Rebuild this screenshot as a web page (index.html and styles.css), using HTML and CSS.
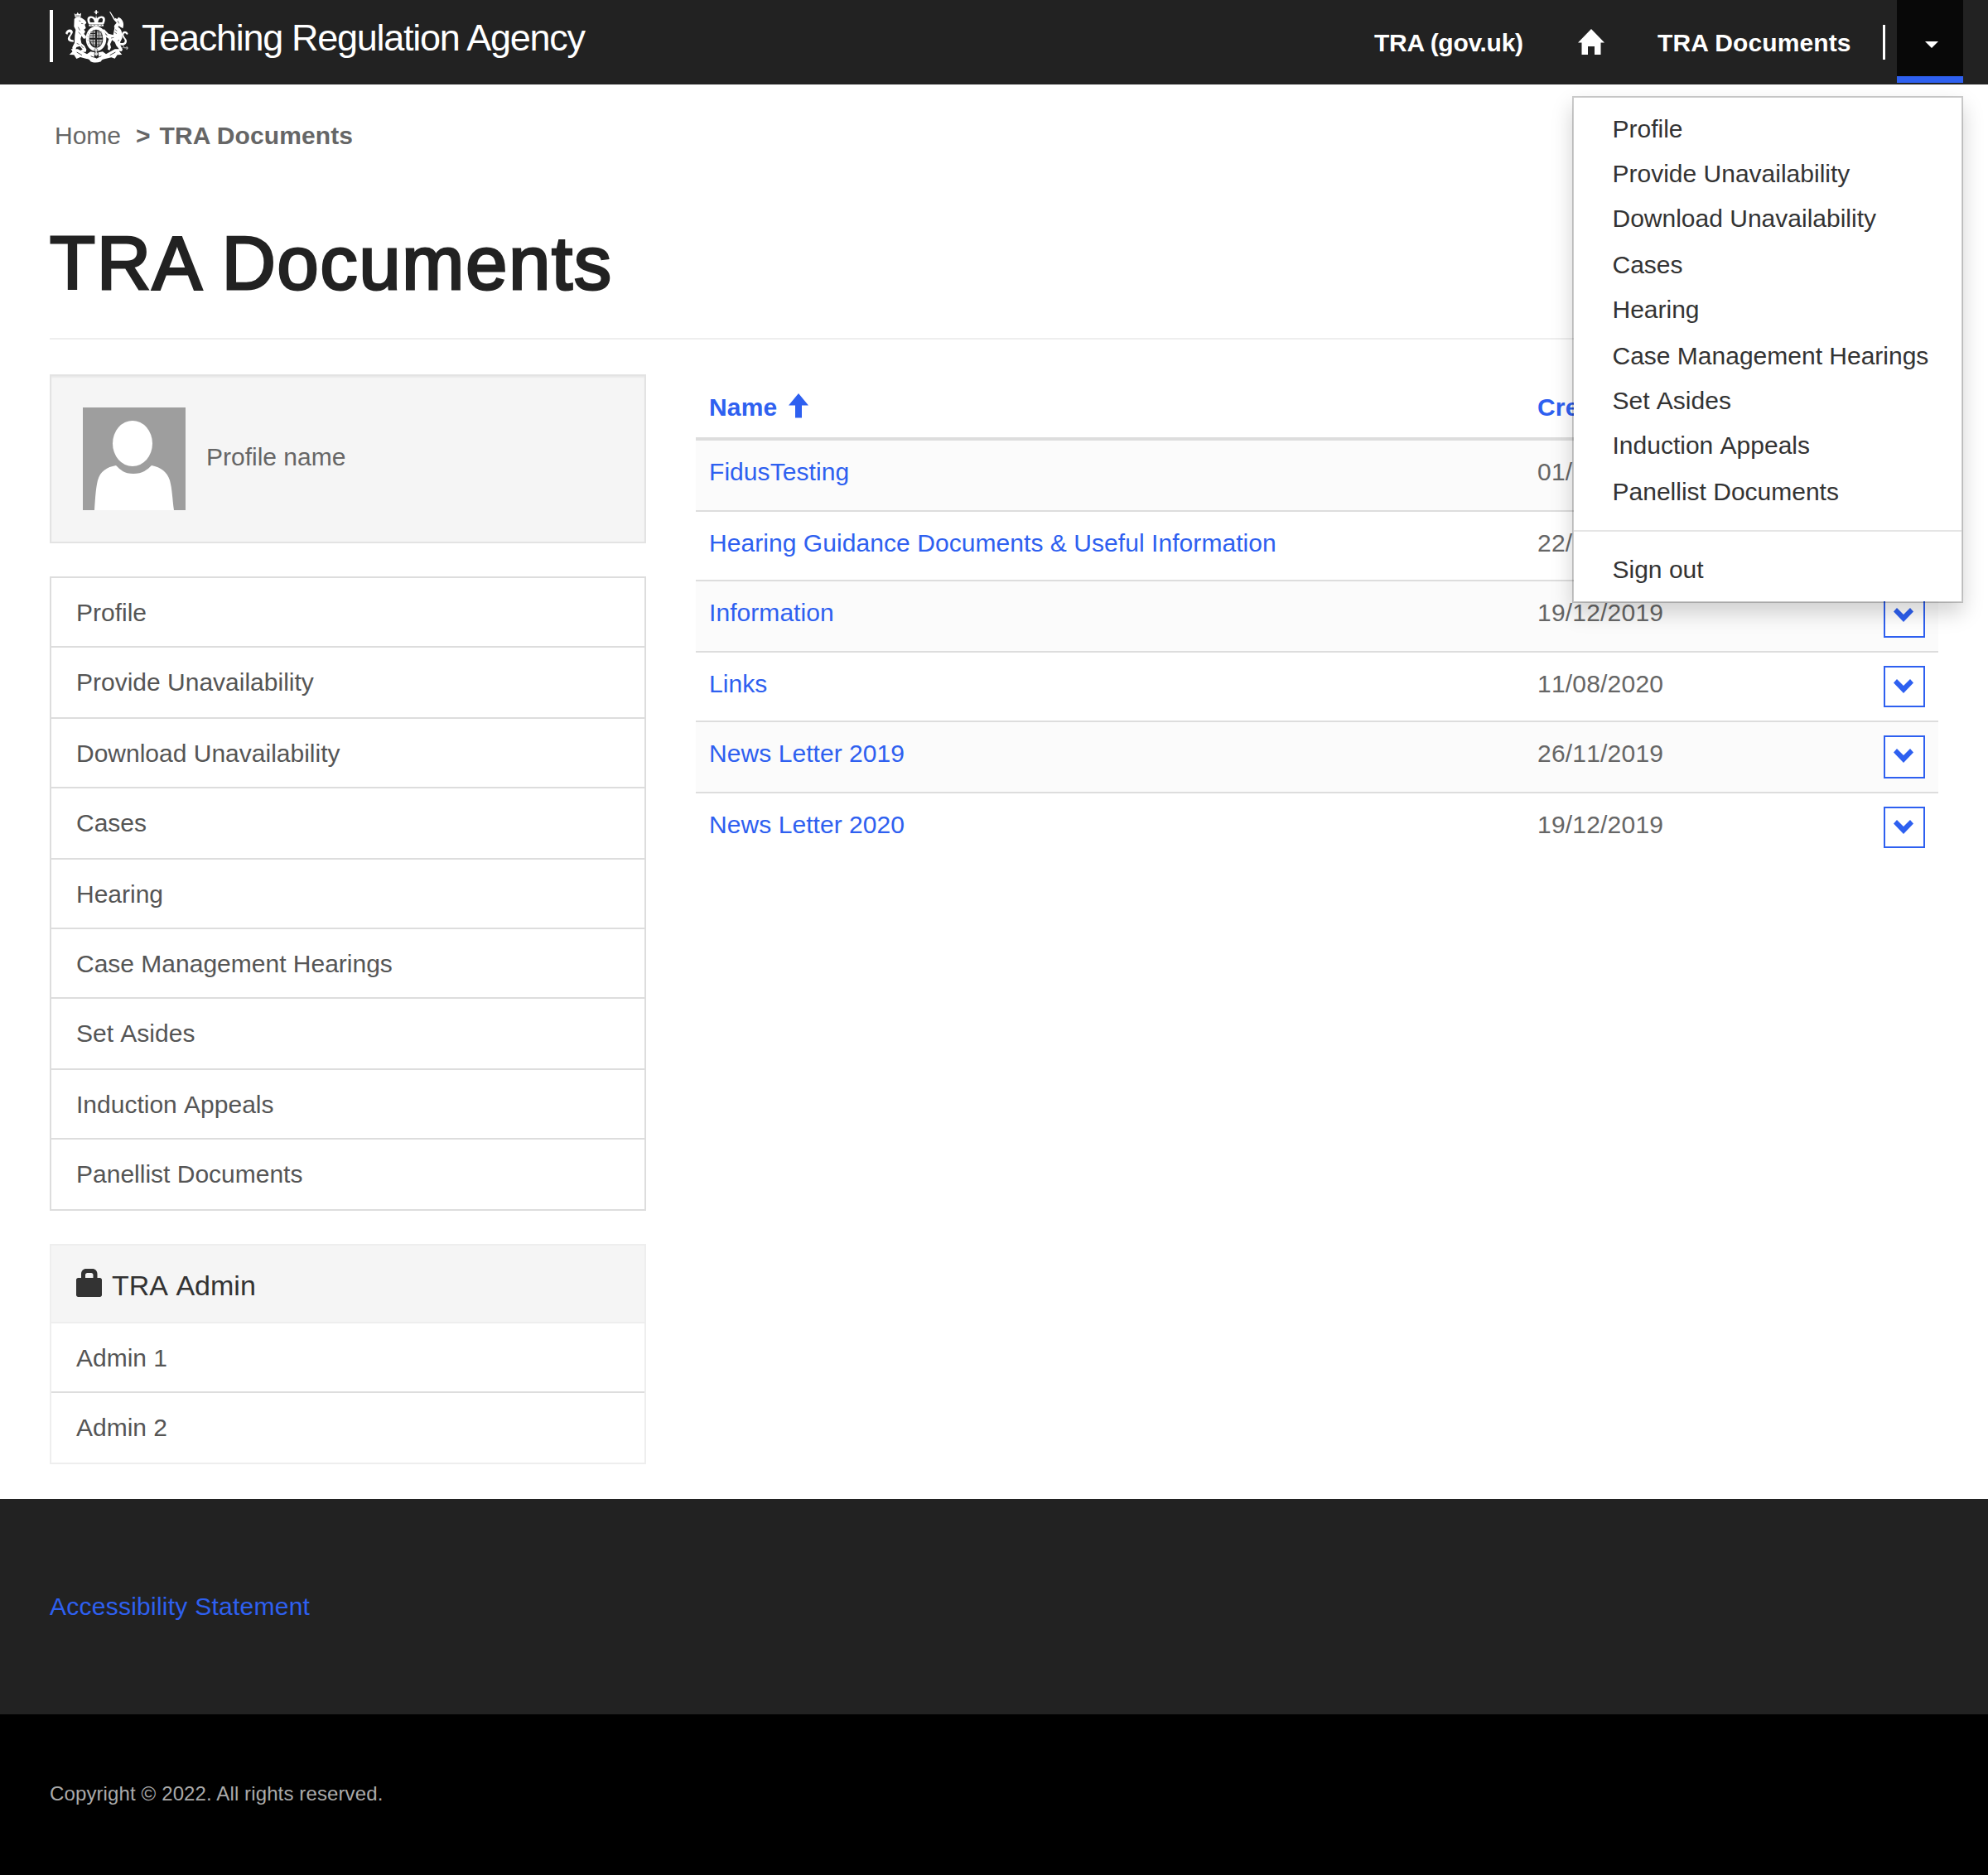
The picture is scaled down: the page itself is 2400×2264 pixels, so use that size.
FILE: index.html
```html
<!DOCTYPE html>
<html lang="en">
<head>
<meta charset="utf-8">
<title>TRA Documents</title>
<link rel="stylesheet" href="styles.css">
</head>
<body>
<header class="topbar">
  <a class="brand">
    <span class="brand-bar"></span>
    <svg class="crest" viewBox="0 0 300 225" fill="#fff" stroke="none">
      <!-- crown -->
      <path d="M136 22h5v5h5v4h-5v6h-5v-6h-5v-4h5z"/>
      <path d="M111 72c-7-14-6-27 5-28 8-1 15 2 20 8l2-13 3 13c5-6 12-9 20-8 11 1 12 14 5 28z"/>
      <path d="M117 66c-4-9-3-15 3-16 7 0 11 7 12 16zM160 66c4-9 3-15-3-16-7 0-11 7-12 16z" fill="#222"/>
      <path d="M112 73h53v7h-53z"/>
      <path d="M118 76h4m8 0h4m9 0h4m8 0h4" stroke="#222" stroke-width="2"/>
      <!-- garter and shield -->
      <path fill-rule="evenodd" d="M138 80c21 0 37 19 37 45s-16 45-37 45-37-19-37-45 16-45 37-45zm0 12c-14 0-25 13-25 33s11 33 25 33 25-13 25-33-11-33-25-33z"/>
      <path d="M116 108h19v14h-21zM141 97h12l7 25h-19zM114 128h21v24l-10-3zM141 128h20l-6 20-14 7zM121 96h14v9h-17z" opacity=".68"/>
      <path d="M118 101h40M115 114h46M115 136h46M121 147h34M127 94v60M148 94v60" stroke="#222" stroke-width="2"/>
      <path d="M107 105l5 4m-6 8h6m-6 14h6m-3 14 6-3m46-37-5 4m6 8h-6m6 14h-6m3 14-6-3" stroke="#999" stroke-width="2"/>
      <!-- lion -->
      <path d="M62 47l-3-14 7 5 5-9 5 8 8-5-2 15z"/>
      <path d="M64 42h15" stroke="#222" stroke-width="2"/>
      <path d="M59 54c4-7 17-9 27-4 8 4 16 10 17 18l-6 6 4 13-7 5 5 8-5 8 8 8-1 8-8 1-8-10-3 11 3 16 11 9 7 13-2 9H83l-1-6 7-3-10-12-12 4-4 10 3 11-3 6H48l-1-5 6-4-1-18 8-16 1-26 3-21-6-12z"/>
      <path d="M76 60l6 2m2 8 7 1M73 83l6 12m-5 6 8 9m-14 32 9 4M84 150l8 9" stroke="#222" stroke-width="2" fill="none"/>
      <path d="M57 137c-20 0-26-10-18-21 5-7 9-11 4-14-5-2-9 5-9 9l-7-5c3-12 15-18 23-12 8 7 1 15-4 22-5 8 0 14 10 14z"/>
      <!-- unicorn -->
      <path d="M186 27l4 1 17 27-4 3zM203 57l5-7 6 4 5-7c12 4 20 17 18 32l-2 9-8-5-7-2-8 6-9-3 2-8 7-8z"/>
      <path d="M206 79c12 3 23 9 25 23l2 20-8 16 2 13 7 13-3 7-7-1-5-10-8-10-5-12-10-8-7 15 3 12-5 10-7-3 1-10-3-9 6-19-9-7-9 4-5-5 6-9 13 5-12-13-8 1-2-7 9-4 16 16 17 5z"/>
      <path d="M216 60l5 10m-1 8 6 8m-19 6 7 5m-9 5 8 5m-21 16 10-2m14 13 6-5m-18-66 7 3" stroke="#222" stroke-width="2" fill="none"/>
      <path d="M225 140c11 4 20-2 16-11-4-8-13-14-9-24 4-9 18-10 22 3l-5 3c-3-7-10-7-11-1-1 8 10 14 11 23 1 14-14 20-24 13z"/>
      <path d="M226 147c13-2 16 8 7 12m6-1 13 1m-4-6 5 6-5 6" stroke="#fff" stroke-width="2.500" fill="none"/>
      <!-- ribbon -->
      <path d="M47 163h25l33 18 13-9 15 3-2 17 9 5 8-5-2-17 16-3 12 9 32-18h24l-8 8 10 12-17 1-9 13-13-4-22 5c-8 1-14 4-15 10-13 5-28 5-38 0-2-6-7-10-15-10l-22-6-14 6-9-14-17-1 12-11z"/>
      <path d="M68 174l19 11M208 174l-20 11M119 188c10 6 27 6 38 0" stroke="#222" stroke-width="2.500" fill="none"/>
      <path d="M131 164l6-5 7 5-3 9 6 8-8 8-8-8 5-7z" fill="#ddd" stroke="#222" stroke-width="1.500"/>
    </svg>
    <span class="brand-name">Teaching Regulation Agency</span>
  </a>
  <nav class="topnav">
    <a class="nav-gov">TRA (gov.uk)</a>
    <svg class="nav-home" viewBox="0 0 32 31" fill="#fff"><path d="M16 0l16 16.500h-4.500V31H20V21h-8v10H4.500V16.500H0z"/></svg>
    <a class="nav-docs">TRA Documents</a>
    <span class="nav-divider"></span>
    <div class="user-menu">
      <span class="caret"></span>
      <ul class="dropdown">
        <li>Profile</li>
        <li>Provide Unavailability</li>
        <li>Download Unavailability</li>
        <li>Cases</li>
        <li>Hearing</li>
        <li>Case Management Hearings</li>
        <li>Set Asides</li>
        <li>Induction Appeals</li>
        <li>Panellist Documents</li>
        <li class="sign-out">Sign out</li>
      </ul>
    </div>
  </nav>
</header>

<main class="page">
  <div class="breadcrumb"><a>Home</a><b class="crumb-sep">&gt;</b><b>TRA Documents</b></div>
  <h1>TRA Documents</h1>
  <div class="columns">
    <aside class="sidebar">
      <div class="profile">
        <svg class="avatar" viewBox="0 0 124 124">
          <path fill="#9e9e9e" d="M0 0h124v124H0z"/>
          <ellipse cx="60" cy="43.500" rx="24" ry="27.500" fill="#fff"/>
          <path fill="#fff" d="M14 124c1-14 1.500-26 4-36 3-11 11-16 22-18 5 5 10 10 21 10s17-5 22-10c11 2 19 8 22 18 3 11 3 22 5 36z"/>
        </svg>
        <span>Profile name</span>
      </div>
      <ul class="side-list">
        <li>Profile</li>
        <li>Provide Unavailability</li>
        <li>Download Unavailability</li>
        <li>Cases</li>
        <li>Hearing</li>
        <li>Case Management Hearings</li>
        <li>Set Asides</li>
        <li>Induction Appeals</li>
        <li>Panellist Documents</li>
      </ul>
      <section class="admin">
        <h2>
          <svg class="lock" viewBox="0 0 31 34" fill="#333"><path fill-rule="evenodd" d="M6 11V6.500C6 2.500 8.500 0 12 0h7.500c3.500 0 6 2.500 6 6.500V11H28.500c1.500 0 2.500 1 2.500 2.500v18c0 1.500-1 2.500-2.500 2.500h-26C1 34 0 33 0 31.500v-18C0 12 1 11 2.500 11zM11 11h9.500V7.500c0-1.500-1-2.500-2.500-2.500h-4.500C12 5 11 6 11 7.500z"/></svg>
          <span>TRA Admin</span>
        </h2>
        <ul>
          <li>Admin 1</li>
          <li>Admin 2</li>
        </ul>
      </section>
    </aside>

    <section class="documents">
      <div class="row head">
        <span>Name <svg class="sort" viewBox="0 0 24 30" fill="#2e60f0"><path d="M12 0l12 14.500h-8V29.500H8V14.500H0z"/></svg></span>
        <span>Cre</span>
      </div>
      <div class="row"><a>FidusTesting</a><span>01/</span></div>
      <div class="row"><a>Hearing Guidance Documents &amp; Useful Information</a><span>22/</span></div>
      <div class="row tall"><a>Information</a><span>19/12/2019</span><button><svg viewBox="0 0 24 17"><path d="M4 0l8 8 8-8 4 4.500L12 17 0 4.500z"/></svg></button></div>
      <div class="row"><a>Links</a><span>11/08/2020</span><button><svg viewBox="0 0 24 17"><path d="M4 0l8 8 8-8 4 4.500L12 17 0 4.500z"/></svg></button></div>
      <div class="row tall"><a>News Letter 2019</a><span>26/11/2019</span><button><svg viewBox="0 0 24 17"><path d="M4 0l8 8 8-8 4 4.500L12 17 0 4.500z"/></svg></button></div>
      <div class="row"><a>News Letter 2020</a><span>19/12/2019</span><button><svg viewBox="0 0 24 17"><path d="M4 0l8 8 8-8 4 4.500L12 17 0 4.500z"/></svg></button></div>
    </section>
  </div>
</main>

<footer>
  <div class="footer-links"><a>Accessibility Statement</a></div>
  <div class="copyright">Copyright © 2022. All rights reserved.</div>
</footer>
</body>
</html>
```
FILE: styles.css
```css
* { box-sizing: border-box; }

body {
  margin: 0;
  background: #fff;
  color: #666;
  font: 30px/42px "Liberation Sans", Arial, Helvetica, sans-serif;
}

ul { list-style: none; margin: 0; padding: 0; }

/* Top bar */
.topbar {
  display: flex;
  justify-content: space-between;
  height: 102px;
  padding: 0 30px 0 60px;
  background: #222;
  color: #fff;
}

.brand { display: flex; }
.brand-bar { width: 4px; height: 63px; margin-top: 12px; background: #fff; }
.crest { width: 100px; height: 75px; margin: 5px 0 0 6px; }
.brand-name {
  font-size: 45px;
  line-height: 60px;
  letter-spacing: -1.28px;
  margin: 16px 0 0 1px;
  white-space: nowrap;
}

.topnav { display: flex; font-weight: bold; white-space: nowrap; }
.nav-gov { width: 246px; padding-top: 31px; letter-spacing: -0.3px; }
.nav-home { width: 32px; height: 31px; margin-top: 35px; }
.nav-docs { width: 271px; padding: 31px 0 0 64px; margin-right: 65px; letter-spacing: 0.1px; }
.nav-divider { width: 3px; height: 42px; margin: 30px 14px 0 0; background: #fff; }

.user-menu {
  position: relative;
  display: flex;
  justify-content: center;
  width: 80px;
  height: 100px;
  padding: 50px 0 0 4px;
  background: #080808;
  border-bottom: 8px solid #2e60f0;
}
.caret {
  width: 16px;
  height: 8px;
  background: #fff;
  clip-path: polygon(0 0, 100% 0, 50% 100%);
}

.dropdown {
  position: absolute;
  top: 116px;
  right: 0;
  width: 472px;
  height: 612px;
  padding-top: 16px;
  background: #fff;
  background-clip: padding-box;
  border: 2px solid rgba(0, 0, 0, 0.2);
  box-shadow: 0 12px 24px rgba(0, 0, 0, 0.175);
  color: #333;
  font-weight: normal;
  font-kerning: none;
}
.dropdown li { height: 54px; padding: 1px 0 0 46.500px; }
.dropdown li:nth-child(3),
.dropdown li:nth-child(5),
.dropdown li:nth-child(8) { height: 56px; }
.dropdown .sign-out {
  height: 86px;
  margin-top: 14px;
  padding-top: 25px;
  border-top: 2px solid #e5e5e5;
}

/* Page */
.page { height: 1708px; padding: 0 60px; }

.breadcrumb { display: flex; height: 82px; padding: 41px 0 0 6px; }
.crumb-sep { margin: 0 11px 0 18px; }
.crumb-sep + b { letter-spacing: 0.1px; }

h1 {
  height: 226px;
  margin: 0;
  padding-top: 85px;
  border-bottom: 2px solid #eee;
  color: #222;
  font-size: 90px;
  font-weight: normal;
  line-height: 98px;
  letter-spacing: 1.9px;
  -webkit-text-stroke: 3px #222;
}

.columns { display: flex; gap: 60px; padding-top: 42px; }
.sidebar { width: 720px; }

.profile {
  display: flex;
  height: 204px;
  padding: 38px;
  background: #f5f5f5;
  border: 2px solid #e3e3e3;
  box-shadow: inset 0 2px 2px rgba(0, 0, 0, 0.05);
}
.avatar { width: 124px; height: 124px; }
.profile span { padding: 39px 0 0 25px; }

.side-list { margin-top: 40px; border: 2px solid #ddd; border-top: 0; color: #555; font-kerning: none; }
.side-list li, .admin li {
  height: 84px;
  padding: 21px 0 0 30px;
  border-top: 2px solid #ddd;
}
.side-list li:nth-child(2),
.side-list li:nth-child(4),
.side-list li:nth-child(7),
.side-list li:nth-child(9),
.admin li:last-child { height: 86px; }

.admin { margin-top: 40px; border: 2px solid #eee; color: #555; font-kerning: none; }
.admin h2 {
  display: flex;
  height: 92px;
  margin: 0;
  padding: 27px 0 0 30px;
  background: #f5f5f5;
  color: #333;
  font-size: 34px;
  font-weight: normal;
}
.lock { width: 31px; height: 34px; margin: 1px 12px 0 0; }
.admin li:first-child { border-top-color: #eee; }

/* Documents table */
.documents { width: 1500px; }
.row {
  display: grid;
  grid-template-columns: 1000px 418px 50px;
  height: 84px;
  padding: 17px 0 0 16px;
  border-top: 2px solid #ddd;
}
.row.tall { height: 86px; }
.row:nth-child(even) { background: #fbfbfb; }
.row a, .head { color: #2e60f0; }
.row a { letter-spacing: 0.060px; }
.row span { font-kerning: none; letter-spacing: 0.200px; }
.row.head {
  height: 76px;
  padding-top: 19px;
  border-top: 0;
  font-weight: bold;
}
.row.head + .row { height: 88px; border-top-width: 4px; }
.sort { width: 24px; height: 30px; margin-left: 5px; vertical-align: -3px; }

.row button {
  width: 50px;
  height: 50px;
  margin: -1px 0 0;
  padding: 14px 0 0 10px;
  background: #fff;
  border: 2px solid #2e60f0;
  display: flex;
}
.row.tall button { height: 52px; }
.row button svg { width: 24px; height: 17px; fill: #2e60f0; }

/* Footer */
.footer-links {
  height: 260px;
  padding: 109px 60px 0;
  background: #222;
  color: #2e60f0;
  letter-spacing: 0.250px;
}
.copyright {
  height: 194px;
  padding: 75px 60px 0;
  background: #000;
  color: #aaa;
  font-size: 24px;
  letter-spacing: 0.120px;
}
```
